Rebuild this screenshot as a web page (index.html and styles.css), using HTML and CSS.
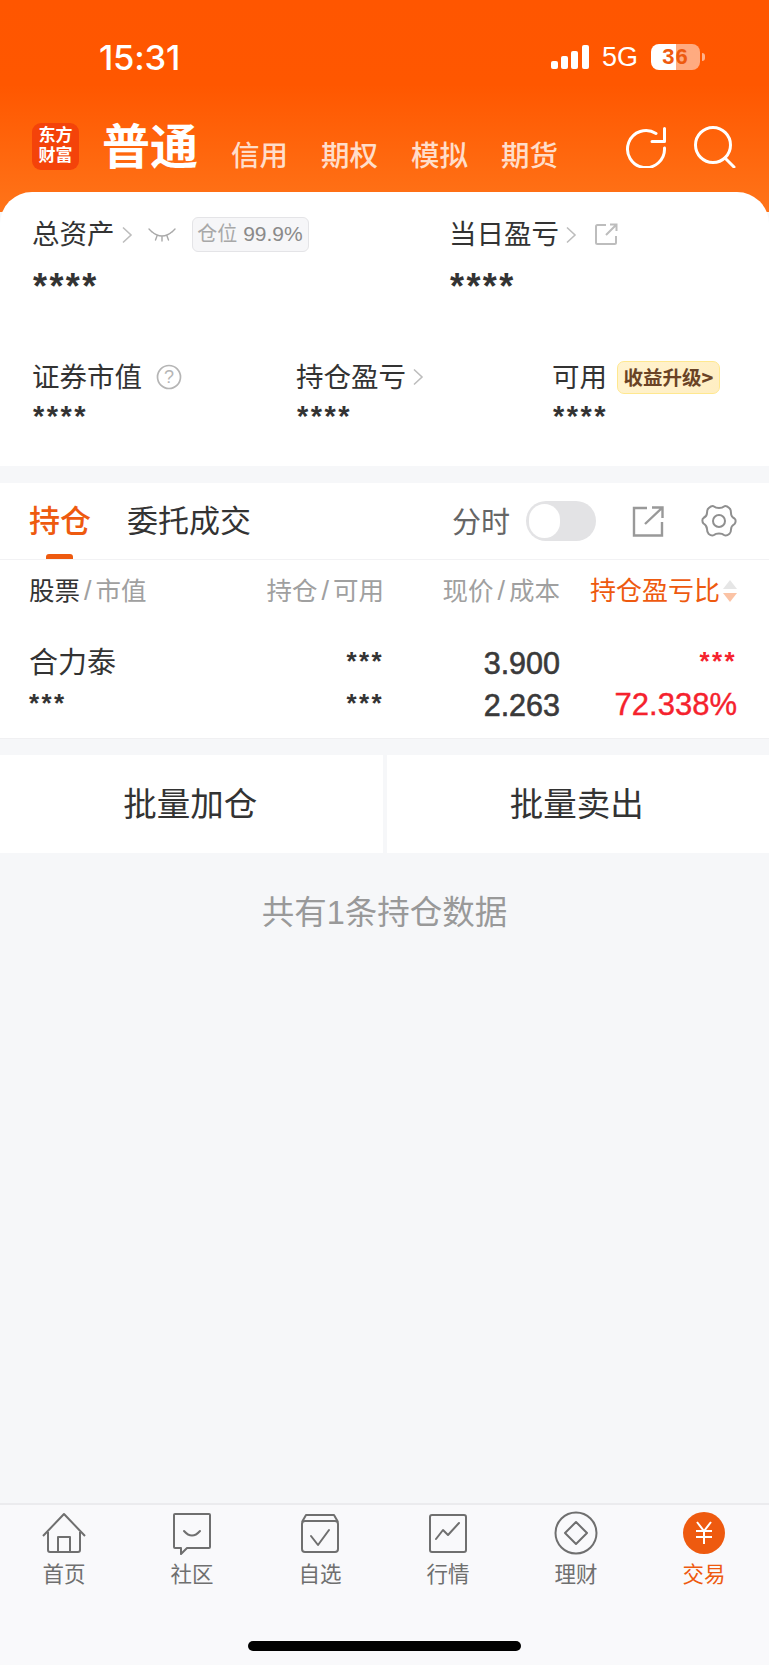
FILE: index.html
```html
<!DOCTYPE html>
<html lang="zh-CN">
<head>
<meta charset="utf-8">
<title>交易</title>
<link rel="stylesheet" href="styles.css">
</head>
<body>
<div class="page">
  <header class="top">
    <div class="status">
      <span class="time">15:31</span>
      <div class="status-right">
        <svg class="signal" width="38" height="24" viewBox="0 0 38 24" fill="#fff"><rect x="0" y="16" width="7" height="8" rx="2"/><rect x="10" y="11" width="7" height="13" rx="2"/><rect x="20" y="6" width="7" height="18" rx="2"/><rect x="31" y="0" width="7" height="24" rx="2"/></svg>
        <span class="net">5G</span>
        <span class="battery">36</span>
        <span class="nub"></span>
      </div>
    </div>
    <nav class="acct">
      <div class="logo">东方<br>财富</div>
      <span class="acct-main">普通</span>
      <div class="acct-tabs"><span>信用</span><span>期权</span><span>模拟</span><span>期货</span></div>
      <div class="acct-icons">
        <svg width="42" height="42" viewBox="0 0 42 42" fill="none" stroke="#fff" stroke-width="3" stroke-linecap="round" stroke-linejoin="round"><path d="M31 7.500A18.500 18.500 0 1 0 39.500 22"/><path d="M27 15.500H39.500V2.500"/></svg>
        <svg width="42" height="42" viewBox="0 0 42 42" fill="none" stroke="#fff" stroke-width="3" stroke-linecap="round"><circle cx="19" cy="19" r="17.500"/><path d="M31 32 40 41"/></svg>
      </div>
    </nav>
  </header>

  <section class="card">
    <div class="stats-top">
      <div class="stat">
        <div class="label"><span>总资产</span>
          <svg class="chev" width="12" height="18" viewBox="0 0 12 18" fill="none" stroke="#bdbdbd" stroke-width="1.600"><path d="M2 1.500 10 9 2 16.500"/></svg>
          <svg class="eye" width="28" height="14" viewBox="0 0 28 14" fill="none" stroke="#a9a9a9" stroke-width="1.400" stroke-linecap="round"><path d="M3 3Q14 13 25 3M1 1l3 3M27 1l-3 3M9 8 7.500 12M19 8l1.500 4M14 9v4"/></svg>
          <span class="pos-badge"><i>仓位</i> 99.9%</span>
        </div>
        <div class="mask-lg">****</div>
      </div>
      <div class="stat">
        <div class="label"><span>当日盈亏</span>
          <svg class="chev" width="12" height="18" viewBox="0 0 12 18" fill="none" stroke="#bdbdbd" stroke-width="1.600"><path d="M2 1.500 10 9 2 16.500"/></svg>
          <svg class="share-sm" width="24" height="23" viewBox="0 0 24 23" fill="none" stroke="#bdbdbd" stroke-width="2"><path d="M11 2H2.500a1.500 1.500 0 0 0-1.500 1.500v16a1.500 1.500 0 0 0 1.500 1.500h17a1.500 1.500 0 0 0 1.500-1.500V13"/><path d="M11 12 21 2M15 1.500h6.500V8"/></svg>
        </div>
        <div class="mask-lg">****</div>
      </div>
    </div>
    <div class="stats-bottom">
      <div class="stat">
        <div class="label"><span>证券市值</span>
          <svg class="help" width="26" height="26" viewBox="0 0 26 26" fill="none" stroke="#b5b5b5" stroke-width="1.700"><circle cx="13" cy="13" r="11.500"/><text x="13" y="19" text-anchor="middle" class="help-q">?</text></svg>
        </div>
        <div class="mask-md">****</div>
      </div>
      <div class="stat">
        <div class="label"><span>持仓盈亏</span>
          <svg class="chev" width="12" height="18" viewBox="0 0 12 18" fill="none" stroke="#bdbdbd" stroke-width="1.600"><path d="M2 1.500 10 9 2 16.500"/></svg>
        </div>
        <div class="mask-md">****</div>
      </div>
      <div class="stat">
        <div class="label"><span>可用</span><span class="up-badge">收益升级<b>&gt;</b></span></div>
        <div class="mask-md">****</div>
      </div>
    </div>
  </section>

  <section class="holdings">
    <div class="tabs">
      <div class="tab tab-on">持仓</div>
      <div class="tab">委托成交</div>
      <div class="tools">
        <span class="tool-label">分时</span>
        <span class="toggle"><span class="knob"></span></span>
        <svg class="tool-share" width="32" height="31" viewBox="0 0 32 31" fill="none" stroke="#999" stroke-width="2.400"><path d="M15 2H2v27.500h28V16"/><path d="M13 18 30 2M20 1.500h10.500V12"/></svg>
        <svg class="tool-gear" width="36" height="36" viewBox="0 0 36 36" fill="none" stroke="#8f8f8f" stroke-width="2"><path d="M13 3.500c2 2 8 2 10 0 1.500-1 4 .5 5.500 1.800 1.500 1.200 1.500 3.200 1.500 4.700 0 2 1.500 4.500 3.500 5.500 1.500 1 1.500 4 0 5.500-2 1.200-3.500 3.500-3.500 5.500 0 1.500 0 3-1.500 4.200-1.500 1.300-4 2.300-5.500 1.300-2-2-8-2-10 0-1.500 1-4-.000-5.500-1.300C6 29 6 27.500 6 26c0-2-1.500-4.300-3.500-5.500-1.500-1.500-1.500-4.500 0-5.500C4.500 14 6 12 6 10c0-1.500 0-3.500 1.500-4.700C9 4 11.500 2.500 13 3.500Z"/><circle cx="18" cy="18" r="6"/></svg>
      </div>
    </div>
    <div class="thead">
      <div class="c1"><span class="dark">股票</span><span class="sl">/</span>市值</div>
      <div class="c2">持仓<span class="sl">/</span>可用</div>
      <div class="c3">现价<span class="sl">/</span>成本</div>
      <div class="c4"><span>持仓盈亏比</span>
        <svg width="16" height="26" viewBox="0 0 16 26"><path d="M8 2 15 11H1Z" fill="#e6e6e6"/><path d="M8 24 15 15H1Z" fill="#fbc3a5"/></svg>
      </div>
    </div>
    <div class="trow">
      <div class="c1 name">合力泰</div>
      <div class="c2 stars">***</div>
      <div class="c3 num">3.900</div>
      <div class="c4 stars red">***</div>
    </div>
    <div class="trow trow-2">
      <div class="c1 stars">***</div>
      <div class="c2 stars">***</div>
      <div class="c3 num">2.263</div>
      <div class="c4 num red">72.338%</div>
    </div>
  </section>

  <div class="batch">
    <div class="batch-btn">批量加仓</div>
    <div class="batch-btn">批量卖出</div>
  </div>

  <main class="rest">共有1条持仓数据</main>

  <footer class="bar">
    <div class="bar-items">
      <div class="item">
        <svg width="44" height="44" viewBox="0 0 44 44" fill="none" stroke="#6f6f6f" stroke-width="2" stroke-linejoin="round"><path d="M1 25 22 3l21 22"/><path d="M6 21v18a2 2 0 0 0 2 2h28a2 2 0 0 0 2-2V21"/><path d="M16 41V26h12v15"/></svg>
        <span>首页</span>
      </div>
      <div class="item">
        <svg width="44" height="44" viewBox="0 0 44 44" fill="none" stroke="#6f6f6f" stroke-width="2" stroke-linejoin="round"><path d="M5 3h34a1 1 0 0 1 1 1v32a1 1 0 0 1-1 1H17l-6 6v-6H5a1 1 0 0 1-1-1V4a1 1 0 0 1 1-1Z"/><path d="M14 20q8 9 16 0" stroke-linecap="round"/></svg>
        <span>社区</span>
      </div>
      <div class="item">
        <svg width="44" height="44" viewBox="0 0 44 44" fill="none" stroke="#6f6f6f" stroke-width="2" stroke-linejoin="round"><path d="M4 11 8 4h28l4 7"/><rect x="4" y="10" width="36" height="31" rx="3"/><path d="M13 25l7 9 11-15" stroke-linecap="round"/></svg>
        <span>自选</span>
      </div>
      <div class="item">
        <svg width="44" height="44" viewBox="0 0 44 44" fill="none" stroke="#6f6f6f" stroke-width="2" stroke-linejoin="round"><rect x="4" y="4" width="36" height="37" rx="2"/><path d="M10 28l7-9 5 5 11-12" stroke-linecap="round"/></svg>
        <span>行情</span>
      </div>
      <div class="item">
        <svg width="44" height="44" viewBox="0 0 44 44" fill="none" stroke="#6f6f6f" stroke-width="2" stroke-linejoin="round"><circle cx="22" cy="22" r="20.500"/><path d="M22 11 33 22 22 33 11 22Z"/></svg>
        <span>理财</span>
      </div>
      <div class="item item-on">
        <svg width="44" height="44" viewBox="0 0 44 44" fill="none" stroke="#fff" stroke-width="2"><circle cx="22" cy="22" r="21" fill="#ee5a0f" stroke="none"/><path d="M15 11l7 9 7-9M14 20h16M14 26h16M22 20v13"/></svg>
        <span>交易</span>
      </div>
    </div>
    <div class="home"></div>
  </footer>
</div>
</body>
</html>
```
FILE: styles.css
```css
* { box-sizing: border-box; margin: 0; padding: 0; }
html, body { background: #f6f7f9; }
body { font-family: "Liberation Sans", "Noto Sans CJK SC", sans-serif; color: #333; }
.page { width: 769px; height: 1665px; display: flex; flex-direction: column; overflow: hidden; }

.top { height: 212px; margin-bottom: -20px; background: linear-gradient(180deg, #ff5600 0%, #ff5700 40%, #ff7419 100%); color: #fff; flex: none; }
.status { height: 123px; padding: 40px 64px 0 99px; display: flex; justify-content: space-between; align-items: flex-start; }
.time { font: 500 34.500px/36px Inter, "Liberation Sans", sans-serif; letter-spacing: -0.2px; }
.status-right { display: flex; align-items: center; height: 32px; margin-top: 1px; }
.signal { margin-right: 13px; }
.net { font: 400 27px/32px "Liberation Sans", sans-serif; margin-right: 13px; }
.battery { width: 49px; height: 26px; border-radius: 8px; background: linear-gradient(90deg, #fff 0 50%, rgba(255,255,255,.5) 50% 100%); color: #ee5a0f; font: 700 22px/26px "Liberation Sans", sans-serif; text-align: center; letter-spacing: 1px; }
.nub { width: 3px; height: 8px; border-radius: 0 3px 3px 0; background: rgba(255,255,255,.55); margin-left: 2px; }

.acct { display: flex; align-items: flex-start; padding-left: 32px; position: relative; }
.logo { width: 47px; height: 47px; border-radius: 9px; background: #f4430a; font: 700 17px/20px "Liberation Sans", "Noto Sans CJK SC", sans-serif; text-align: center; padding-top: 3px; }
.acct-main { margin-left: 23px; margin-top: -9px; font: 700 48px/58px "Noto Sans CJK SC", sans-serif; }
.acct-tabs { display: flex; gap: 33px; margin-left: 33px; margin-top: 12px; font: 500 28.500px/38px "Noto Sans CJK SC", sans-serif; color: rgba(255,255,255,.78); }
.acct-icons { margin-left: auto; margin-right: 33px; margin-top: 3px; display: flex; gap: 27px; }

.card { position: relative; height: 274px; background: #fff; border-radius: 32px 32px 0 0; flex: none; padding: 0 32px; }
.stats-top { display: grid; grid-template-columns: 417px 1fr; padding-top: 25px; }
.stats-bottom { display: grid; grid-template-columns: 264px 256px 1fr; padding-top: 57px; }
.label { display: flex; align-items: center; height: 35px; font-size: 27.500px; line-height: 33px; color: #333; }
.stats-bottom .label { height: 36px; margin-top: -1px; }
.chev { margin-left: 6px; flex: none; }
.eye { margin-left: 15px; }
.pos-badge { margin-left: 16px; height: 35px; width: 117px; border: 1px solid #e4e4e7; border-radius: 6px; background: #f6f6f8; font-size: 21px; line-height: 32px; text-align: center; color: #8a8a8a; white-space: nowrap; }
.pos-badge i { font-style: normal; color: #a8a8a8; font-size: 20px; }
.share-sm { margin-left: 18px; }
.help { margin-left: 14px; }
.help-q { font-size: 18px; fill: #b5b5b5; stroke: none; font-family: "Liberation Sans", sans-serif; }
.up-badge { margin-left: 10px; width: 103px; height: 33px; border-radius: 7px; border: 1.500px solid #ffe88f; background: linear-gradient(135deg, #fff3cf, #ffeec2); color: #6a4325; font: 700 19.500px/29px "Noto Sans CJK SC", sans-serif; text-align: center; white-space: nowrap; }
.mask-lg { font: 700 36px/40px "Liberation Sans", sans-serif; letter-spacing: 2.400px; margin-top: 15px; height: 36px; padding-left: 1px; }
.mask-md { font: 700 29px/32px "Liberation Sans", sans-serif; letter-spacing: 2.500px; margin-top: 5px; height: 30px; padding-left: 1px; }

.holdings { margin-top: 17px; background: #fff; height: 256px; flex: none; border-bottom: 1px solid #f0f0f2; }
.tabs { height: 77px; padding: 0 32px 0 29px; display: flex; align-items: center; border-bottom: 1px solid #f2f2f4; position: relative; }
.tab { font: 400 31px/44px "Noto Sans CJK SC", sans-serif; color: #333; margin-right: 36px; margin-top: -4px; }
.tab-on { color: #ee5a0f; font-weight: 500; }
.tab-on::after { content: ""; position: absolute; left: 46px; bottom: 0; width: 27px; height: 5px; border-radius: 3px 3px 0 0; background: #ee5a0f; }
.tools { margin-left: auto; display: flex; align-items: center; }
.tool-label { font: 400 29px/40px "Noto Sans CJK SC", sans-serif; color: #666; margin-top: -3px; }
.toggle { width: 70px; height: 40px; border-radius: 20px; background: #e3e3e5; margin-left: 16px; padding: 3px; }
.knob { display: block; width: 31px; height: 34px; border-radius: 17px; background: #fff; }
.tool-share { margin-left: 36px; }
.tool-gear { margin-left: 37px; }

.thead, .trow { display: grid; grid-template-columns: 173px 180px 178px 1fr; padding: 0 32px 0 29px; }
.thead { height: 62px; align-items: center; font: 400 25.500px/36px "Liberation Sans", "Noto Sans CJK SC", sans-serif; color: #a0a0a0; white-space: nowrap; }
.thead .c2 { margin-right: -2px; }
.sl { margin: 0 4px; font-size: 27px; font-weight: 400; }
.dark { color: #333; }
.c2, .c3, .c4 { text-align: right; }
.thead .c4 { display: flex; justify-content: flex-end; align-items: center; gap: 2px; color: #ee5a0f; font-size: 26px; margin-right: -1px; }
.trow { height: 42px; align-items: center; margin-top: 20px; }
.trow-2 { margin-top: 0; }
.name { font: 400 29px/36px "Noto Sans CJK SC", sans-serif; color: #333; margin-top: -7px; }
.stars { font: 700 26px/24px "Liberation Sans", sans-serif; color: #333; letter-spacing: 2.400px; height: 24px; margin-top: -5px; }
.trow .c2.stars { margin-right: -2px; }
.num { font: 400 30.500px/38px "Liberation Sans", sans-serif; color: #3a3a3a; -webkit-text-stroke: .6px #3a3a3a; }
.red { color: #f5222d; }
.num.red { font-size: 31px; -webkit-text-stroke: .4px #f5222d; }

.batch { margin-top: 16px; height: 98px; flex: none; display: grid; grid-template-columns: 1fr 1fr; gap: 4px; }
.batch-btn { background: #fff; font: 400 33.500px/94px "Noto Sans CJK SC", sans-serif; text-align: center; color: #333; padding-right: 2px; }
.rest { flex: 1; padding-top: 38px; text-align: center; font: 400 32.500px/44px "Liberation Sans", "Noto Sans CJK SC", sans-serif; color: #999; }

.bar { height: 162px; flex: none; background: #f9f9fb; border-top: 2px solid #ebebee; }
.bar-items { display: grid; grid-template-columns: repeat(6, 128px); padding-top: 6px; }
.item { display: flex; flex-direction: column; align-items: center; font: 400 21.500px/30px "Noto Sans CJK SC", sans-serif; color: #6f6f6f; }
.item svg { margin-bottom: 3px; }
.item-on { color: #ee5a0f; }
.home { width: 273px; height: 10px; border-radius: 5px; background: #000; margin: 53px auto 0; }
```
